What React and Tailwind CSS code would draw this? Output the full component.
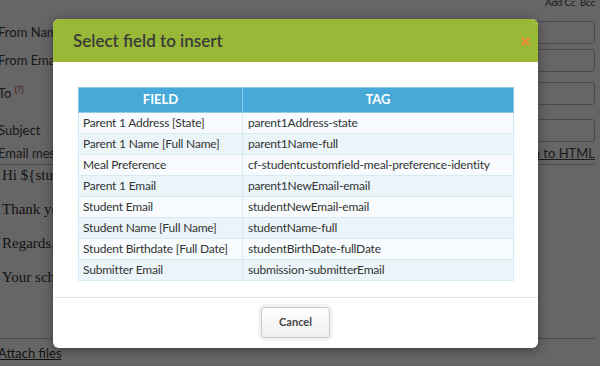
import { useState } from "react";

const fields = [
  { name: "Parent 1 Address [State]", tag: "parent1Address-state" },
  { name: "Parent 1 Name [Full Name]", tag: "parent1Name-full" },
  { name: "Meal Preference", tag: "cf-studentcustomfield-meal-preference-identity" },
  { name: "Parent 1 Email", tag: "parent1NewEmail-email" },
  { name: "Student Email", tag: "studentNewEmail-email" },
  { name: "Student Name [Full Name]", tag: "studentName-full" },
  { name: "Student Birthdate [Full Date]", tag: "studentBirthDate-fullDate" },
  { name: "Submitter Email", tag: "submission-submitterEmail" },
];

const FormRow = ({ label, children, className }) => (
  <div className={`flex items-center h-[23px] ${className || ""}`}>
    <div className="w-[170px] text-[13px] text-[#444] whitespace-nowrap">{label}</div>
    <div className="flex-1 h-full border border-[#bbb] rounded-[3px] bg-white">{children}</div>
  </div>
);

const EmailForm = () => (
  <div className="pr-[5px] -ml-[2px] font-['Lato',sans-serif]">
    <div className="h-[21px] flex justify-end items-start">
      <span className="text-[10px] leading-none -mt-[3px] text-[#444] tracking-tight">Add Cc&nbsp;&nbsp;Bcc</span>
    </div>
    <FormRow label="From Name" />
    <FormRow label="From Email" className="mt-[5px]" />
    <FormRow
      label={
        <span>
          To <sup className="text-[9px] text-[#c0392b]">(?)</sup>
        </span>
      }
      className="mt-[10px]"
    />
    <FormRow label="Subject" className="mt-[14px]" />
    <div className="flex items-end justify-between h-[22px] text-[13px] text-[#444]">
      <span className="leading-none pb-[4px]">Email message</span>
      <span className="underline leading-none pb-[4px]">Switch to HTML</span>
    </div>
    <div className="h-[175px] border-y border-[#bbb] bg-white pl-[4px] font-['Liberation_Serif',serif] text-[15px] text-[#333] leading-[20px] space-y-[14px]">
      <p>Hi ${"{"}studentName{"}"},</p>
      <p>Thank you for your submission.</p>
      <p>Regards,</p>
      <p>Your school</p>
    </div>
    <div className="mt-[5px] text-[13px] text-[#333] underline">Attach files</div>
  </div>
);

const FieldModal = ({ onClose }) => (
  <div className="absolute left-[53px] top-[19px] w-[485px] h-[329px] bg-white rounded-[6px] overflow-hidden shadow-[0_2px_12px_rgba(0,0,0,0.4)] flex flex-col font-['Lato',sans-serif]">
    <div className="h-[43px] shrink-0 bg-[#99b838] flex items-center justify-between pl-[20px] pr-[8px]">
      <h2 className="text-[17px] font-semibold text-[#3a3a3a]">Select field to insert</h2>
      <button onClick={onClose} className="mt-[2px]">
        <svg width="9" height="9" viewBox="0 0 9 9">
          <path d="M1.5 1.5L7.5 7.5M7.5 1.5L1.5 7.5" stroke="#f08a2e" strokeWidth="2.4" strokeLinecap="round" />
        </svg>
      </button>
    </div>

    <div className="px-[25px] pt-[25px] pb-[16px] border-b border-[#e3e3e3]">
      <table className="w-[436px] border-collapse text-[12px] tracking-[-0.2px] text-[#333]">
        <thead>
          <tr className="bg-[#46a9d7] h-[25px]">
            <th className="w-[164px] text-white font-bold text-[13px] tracking-normal border border-[#8fcbe8] uppercase">Field</th>
            <th className="text-white font-bold text-[13px] tracking-normal border border-[#8fcbe8] uppercase">Tag</th>
          </tr>
        </thead>
        <tbody>
          {fields.map((field, index) => (
            <tr
              key={field.tag}
              className={`h-[21px] ${index % 2 === 0 ? "bg-[#f7fbfd]" : "bg-[#ebf5f9]"}`}
            >
              <td className="pl-[4px] border border-[#d6eaf3] leading-none whitespace-nowrap">{field.name}</td>
              <td className="pl-[5px] border border-[#d6eaf3] leading-none whitespace-nowrap">{field.tag}</td>
            </tr>
          ))}
        </tbody>
      </table>
    </div>

    <div className="flex-1 flex justify-center pt-[9px]">
      <button
        onClick={onClose}
        className="w-[69px] h-[31px] rounded-[4px] border border-[#c8c8c8] bg-gradient-to-b from-white to-[#efefef] text-[11px] font-bold text-[#444] shadow-[0_0_0_3px_#f2f2f2]"
      >
        Cancel
      </button>
    </div>
  </div>
);

export default function App() {
  const [open, setOpen] = useState(true);

  return (
    <div className="relative w-[600px] h-[366px] overflow-hidden bg-white">
      <EmailForm />
      {open && (
        <>
          <div className="absolute inset-0 bg-black/60" />
          <FieldModal onClose={() => setOpen(false)} />
        </>
      )}
    </div>
  );
}
